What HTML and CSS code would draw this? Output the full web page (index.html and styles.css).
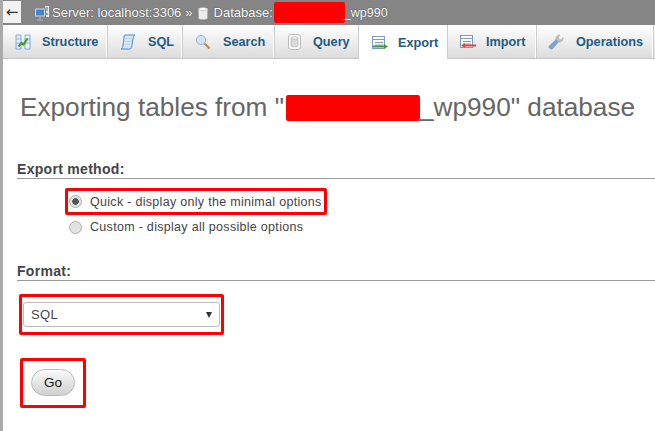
FILE: index.html
```html
<!DOCTYPE html>
<html lang="en">
<head>
<meta charset="utf-8">
<title>Export</title>
<link rel="stylesheet" href="styles.css">
</head>
<body>
<div class="rail"></div>
<div class="page">
  <header class="crumbs">
    <button class="back">←</button>
    <svg class="ic-server" viewBox="0 0 16 16"><rect x="10.500" y=".5" width="5" height="12" fill="#e8e8e8" stroke="#8a8a8a"/><path d="M12 3h2M12 5h2" stroke="#777"/><circle cx="13" cy="9" r="1" fill="#46b04a"/><rect x=".5" y="3" width="11" height="9" fill="#d5d8dc" stroke="#7d8590"/><rect x="2" y="4.500" width="8" height="6" fill="#3f86cf"/><path d="M3 15h6M6 12v3" stroke="#a0a6ac" stroke-width="1.500"/></svg>
    <span>Server: localhost:3306</span>
    <span class="sep">»</span>
    <svg class="ic-db" viewBox="0 0 10 13"><path d="M.5 2v9c0 1 2 1.500 4.500 1.500S9.500 12 9.500 11V2z" fill="#ececec" stroke="#aaa" stroke-width=".6"/><ellipse cx="5" cy="2" rx="4.500" ry="1.500" fill="#fff" stroke="#aaa" stroke-width=".6"/></svg>
    <span>Database:</span>
    <span class="redact r-top"></span>
    <span class="dbname">_wp990</span>
  </header>
  <nav class="tabs">
    <a class="tab t-structure"><svg viewBox="0 0 16 16"><path d="M1 1h5v14H1zM10 1h5v14h-5z" fill="#e6f0fa" stroke="#6a9ddb" stroke-width=".8"/><path d="M1 5h5M1 9h5M10 5h5M10 9h5" stroke="#6a9ddb" stroke-width=".7"/><path d="M3.500 12.500l3-3.500 2 1.500 4-6" fill="none" stroke="#4c9a2a" stroke-width="2.200"/></svg>Structure</a>
    <a class="tab t-sql"><svg viewBox="0 0 16 16"><path d="M4.500 1H15c-1.500 1-1.500 2-2 4l-1.500 8c-.3 1.500-1 2-2 2H1c1-.5 1.500-1 1.800-2.500L4 4c.2-1.500 0-2.300.5-3z" fill="#d5e6f8" stroke="#4f86c6"/><path d="M5.500 4.500h6M5 7.500h6M4.500 10.500h5" stroke="#b5d2ee" stroke-width=".8"/></svg>SQL</a>
    <a class="tab t-search"><svg viewBox="0 0 16 16"><path d="M9.500 9.500l5 5" stroke="#c58a4a" stroke-width="2.400"/><circle cx="6" cy="6" r="4.600" fill="#cfe4f7" stroke="#9db5ca"/></svg>Search</a>
    <a class="tab t-query"><svg viewBox="0 0 13 16"><rect x=".5" y=".5" width="12" height="15" rx="2.500" fill="#fff" stroke="#bbb"/><path d="M3 4v8c0 1 7 1 7 0V4z" fill="#dcdcdc" stroke="#aaa" stroke-width=".6"/><ellipse cx="6.500" cy="4" rx="3.500" ry="1.300" fill="#f3f3f3" stroke="#aaa" stroke-width=".6"/></svg>Query</a>
    <a class="tab active t-export"><svg viewBox="0 0 16 14"><rect x=".5" y=".5" width="12" height="12" fill="#fff" stroke="#7d9cc4"/><path d="M.5 3.500h12M3 6.500h8M3 9h8" stroke="#7d9cc4"/><path d="M1 9.500h11V8l4 2.500-4 2.500v-1.500H1z" fill="#4c9a2a"/></svg>Export</a>
    <a class="tab t-import"><svg viewBox="0 0 16 14"><rect x=".5" y=".5" width="12" height="12" fill="#fff" stroke="#7d9cc4"/><path d="M.5 3.500h12M3 6.500h8M3 9h8" stroke="#7d9cc4"/><path d="M16 9.500H5V8L1 10.500 5 13v-1.500h11z" fill="#e8413c"/></svg>Import</a>
    <a class="tab t-ops"><svg viewBox="0 0 16 16"><path d="M2 14.500a1.800 1.800 0 0 1-.5-2.800L8 5.500l2.500 2.500-5.800 6.500a1.800 1.800 0 0 1-2.700 0z" fill="#7ca3d6" stroke="#6f8db5" stroke-width=".5"/><path d="M8 5.500c-.5-2 .8-4.500 4-4.500l-2 2.500 1 2 2.200.5L15 3.500c.6 3-1.800 5-4.300 4.500z" fill="#bdbdbd" stroke="#999" stroke-width=".4"/></svg>Operations</a>
  </nav>
  <main class="content">
    <h2 class="title">Exporting tables from "<span class="redact r-title"></span>_wp990" database</h2>
    <section class="method">
      <h3 class="sect">Export method:</h3>
      <div class="options">
        <label class="opt opt-quick"><input type="radio" name="m" checked>Quick - display only the minimal options</label>
        <label class="opt opt-custom"><input type="radio" name="m">Custom - display all possible options</label>
      </div>
    </section>
    <section class="format">
      <h3 class="sect">Format:</h3>
      <div class="select-box"><div class="select"><span>SQL</span><span class="caret"></span></div></div>
    </section>
    <div class="go-box"><button class="go">Go</button></div>
  </main>
</div>
</body>
</html>
```
FILE: styles.css
```css
* { box-sizing: border-box; }
html, body { margin: 0; height: 100%; overflow: hidden; }
body { display: flex; font-family: "Liberation Sans", Arial, sans-serif; background: #fff; color: #444; width: 655px; height: 431px; }
.rail { width: 3px; flex: none; background: #aaa; }
.page { flex: 1; min-width: 0; display: flex; flex-direction: column; }
.crumbs { height: 25px; background: #858585; color: #fff; font-size: 13px; display: flex; align-items: center; white-space: nowrap; text-shadow: 0 0 1px #333; }
.back { width: 18px; height: 22px; margin: 0 0 2px; padding: 0; border: 0; background: #f2f2f2; color: #333; font: 15px "DejaVu Sans", sans-serif; text-shadow: none; }
.ic-server { width: 16px; height: 16px; margin: 0 2px 0 13px; }
.sep { margin: 0 3px 0 4px; }
.ic-db { width: 10px; height: 13px; margin: 1px 6px 0 2px; }
.redact { display: inline-block; background: #f00; border-radius: 2px; }
.r-top { width: 71px; height: 21px; margin: 0 -1px 0 1px; }
.dbname { font-size: 12.500px; }
.tabs { height: 34px; display: flex; background: linear-gradient(#fff, #dcdcdc); border-bottom: 1px solid #c4c4c4; }
.tab { display: flex; align-items: center; height: 33px; padding-top: 1px; font-size: 12.700px; font-weight: bold; color: #235a81; border-right: 1px solid #fff; box-shadow: 1px 0 0 #ccc; white-space: nowrap; flex: none; }
.tab svg { width: 16px; height: 16px; flex: none; }
.t-structure { width: 104px; padding-left: 12px; }
.t-structure svg { margin-right: 11px; }
.t-sql { width: 75px; padding-left: 13px; }
.t-sql svg { margin-right: 12px; }
.t-search { width: 92px; padding-left: 13px; }
.t-search svg { margin-right: 12px; }
.t-query { width: 85px; padding-left: 14px; }
.t-query svg { width: 13px; margin-right: 12px; }
.t-export { width: 88px; padding-left: 13px; }
.t-export svg { margin-right: 10px; }
.t-import { width: 89px; padding-left: 13px; }
.t-import svg { margin-right: 10px; }
.t-ops { width: 117px; padding-left: 12px; }
.t-ops svg { margin-right: 12px; }
.tab.active { background: #fff; height: 34px; border-bottom: 0; box-shadow: 1px 0 0 #ccc, -1px 0 0 #ccc; }
.content { flex: 1; padding: 32px 0 0 14px; }
.title { margin: 0 0 0 3px; font-size: 26.200px; font-weight: normal; line-height: 32px; color: #666; white-space: nowrap; }
.r-title { width: 134px; height: 26px; margin: 0 -1px 0 2px; vertical-align: -5px; }
.method { margin-top: 38px; }
.sect { margin: 0; font-size: 14px; font-weight: bold; line-height: 17px; letter-spacing: .3px; color: #444; border-bottom: 1px solid #999; }
.options { margin: 9px 0 0 48px; display: flex; flex-direction: column; }
.opt { display: flex; align-items: center; height: 24px; font-size: 12.500px; letter-spacing: .3px; color: #444; }
.opt input { appearance: none; width: 13px; height: 13px; margin: 0 8px 0 0; border: 1px solid #b0b0b0; border-radius: 50%; background: #e2e2e2; }
.opt input:checked { background: radial-gradient(circle, #555 0 3px, #e2e2e2 3.500px); }
.opt-quick { width: 262px; height: 27px; border: 3px solid #f00; border-radius: 2px; margin-bottom: -1px; padding-left: 1px; }
.opt-custom { height: 25px; padding: 1px 0 0 4px; }
.format { margin-top: 24px; }
.select-box { margin: 13px 0 0 2px; width: 205px; height: 41px; border: 3px solid #f00; border-radius: 2px; padding: 5px 1px 0; }
.select { height: 25px; border: 1px solid #bbb; border-radius: 3px; display: flex; align-items: center; justify-content: space-between; padding: 0 7px; font-size: 13px; color: #444; letter-spacing: .3px; }
.caret { width: 0; height: 0; border: 3.500px solid transparent; border-top: 6px solid #333; border-bottom: 0; }
.go-box { margin: 23px 0 0 3px; width: 66px; height: 50px; border: 3px solid #f00; border-radius: 2px; padding: 8px 0 0 8px; }
.go { display: block; width: 44px; height: 27px; padding: 0; border: 1px solid #bbb; border-radius: 14px; background: linear-gradient(#fafafa, #d0d0d0); font: 13.500px "Liberation Sans", Arial, sans-serif; color: #111; }
```
